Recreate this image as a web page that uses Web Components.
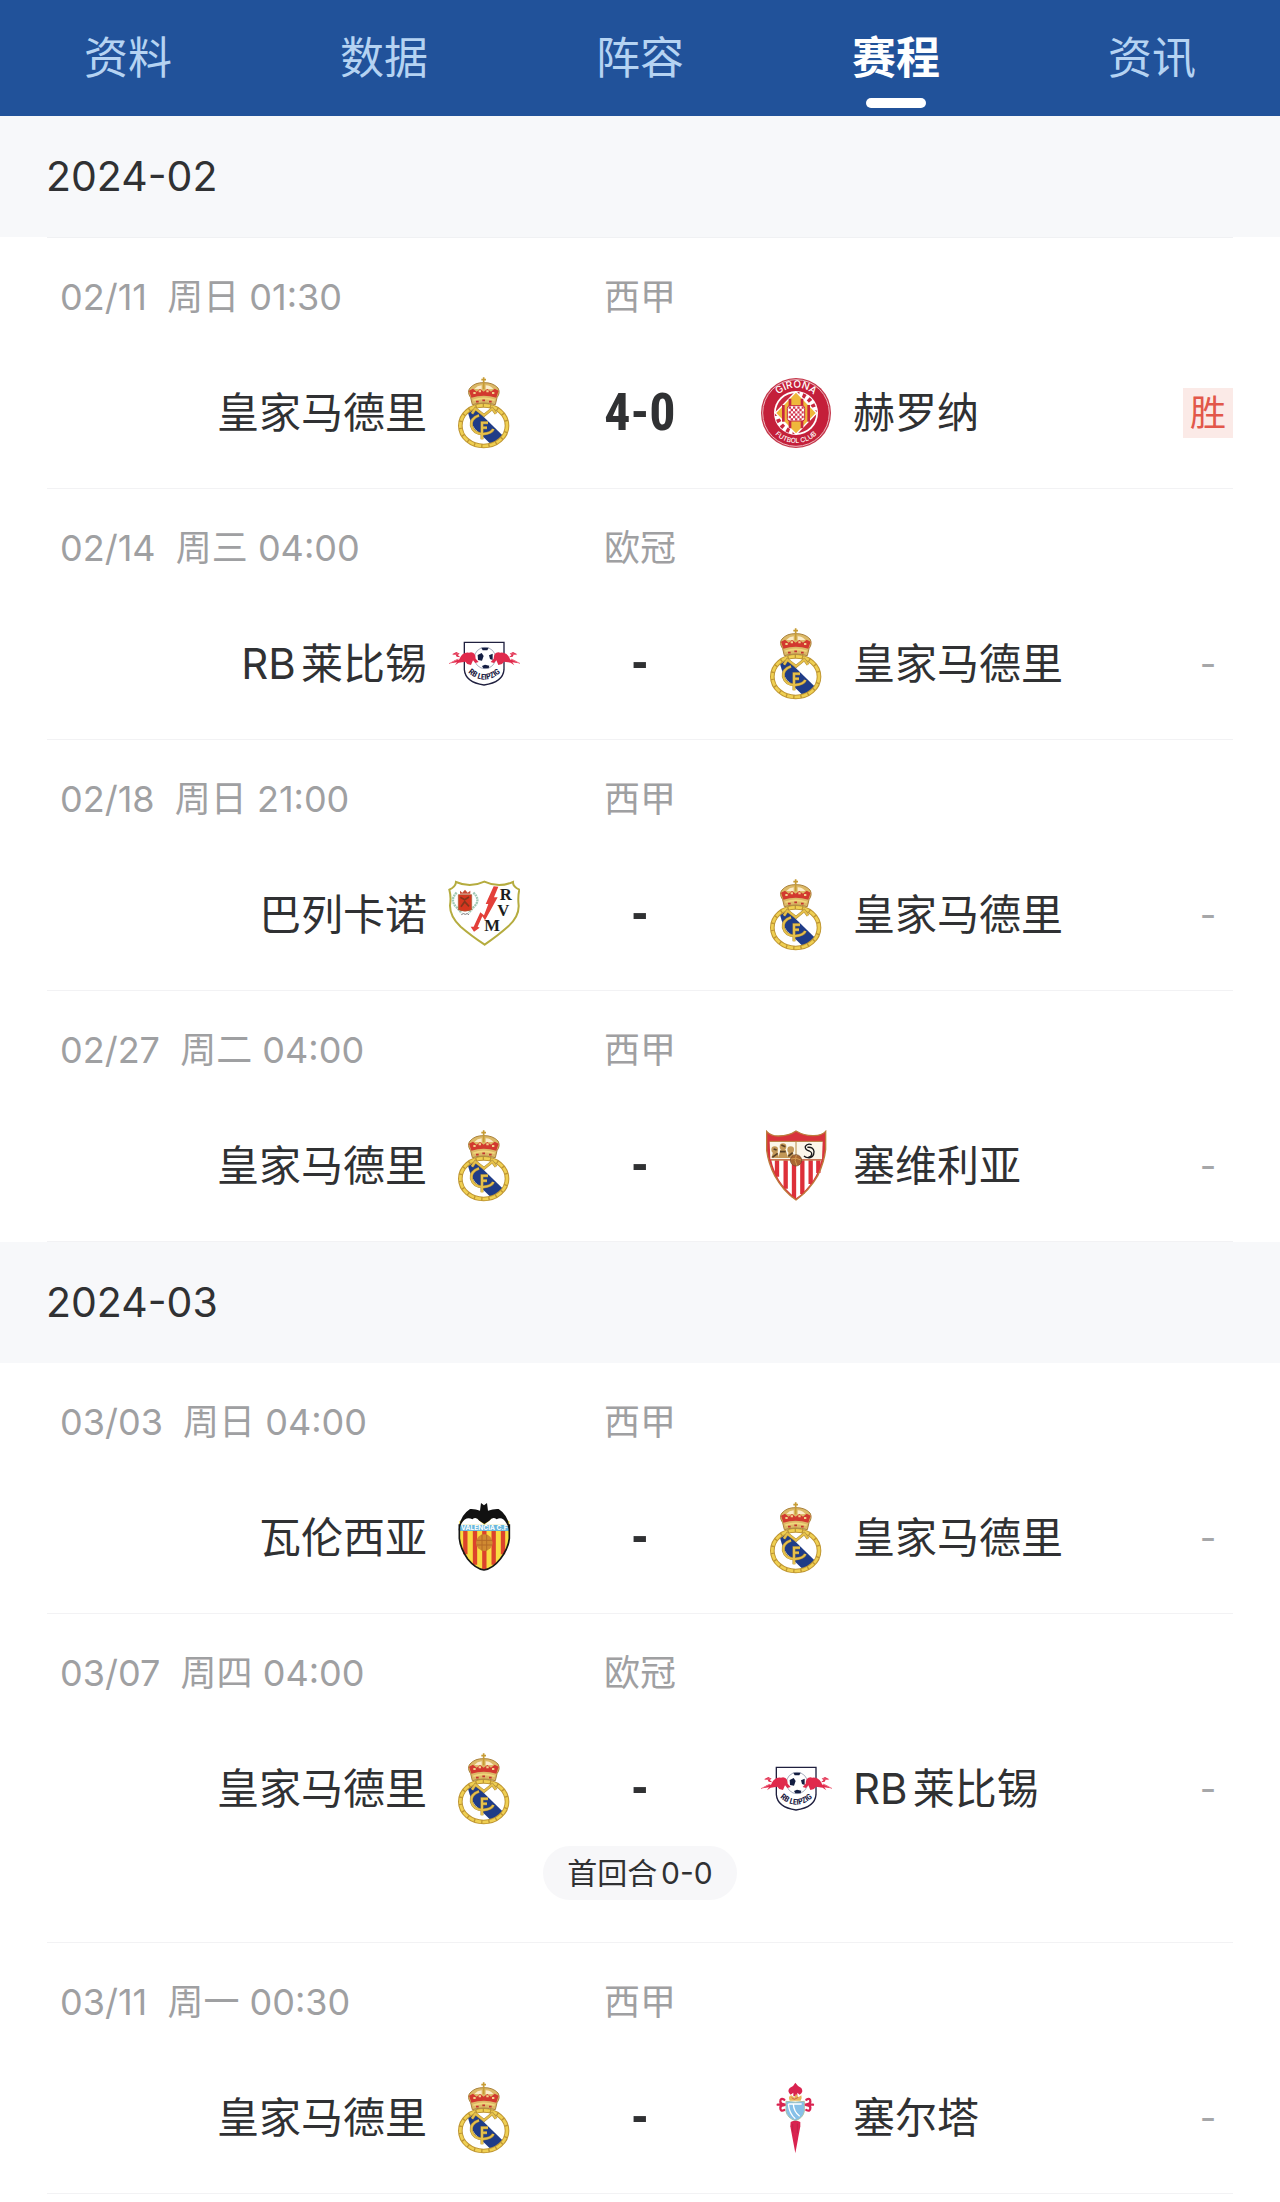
<!DOCTYPE html>
<html lang="zh-CN">
<head>
<meta charset="utf-8">
<meta name="viewport" content="width=device-width, initial-scale=1">
<title>赛程</title>
<style>
    body {
        margin: 0;
        background: #fff;
        color: #303133;
        font-family: Inter, "Noto Sans CJK SC", sans-serif;
        text-autospace: normal;
    }
</style>
</head>
<body>

<tab-bar>
    <tab-item>资料</tab-item>
    <tab-item>数据</tab-item>
    <tab-item>阵容</tab-item>
    <tab-item active>赛程</tab-item>
    <tab-item>资讯</tab-item>
</tab-bar>

<main>
    <month-section month="2024-02" lined>
        <match-row date="02/11  周日 01:30" league="西甲" home="皇家马德里" home-crest="real" score="4-0" away="赫罗纳" away-crest="girona" result="胜"></match-row>
        <match-row date="02/14  周三 04:00" league="欧冠" home="RB莱比锡" home-crest="leipzig" score="-" away="皇家马德里" away-crest="real" result="-"></match-row>
        <match-row date="02/18  周日 21:00" league="西甲" home="巴列卡诺" home-crest="rayo" score="-" away="皇家马德里" away-crest="real" result="-"></match-row>
        <match-row date="02/27  周二 04:00" league="西甲" home="皇家马德里" home-crest="real" score="-" away="塞维利亚" away-crest="sevilla" result="-"></match-row>
    </month-section>
    <month-section month="2024-03">
        <match-row date="03/03  周日 04:00" league="西甲" home="瓦伦西亚" home-crest="valencia" score="-" away="皇家马德里" away-crest="real" result="-"></match-row>
        <match-row date="03/07  周四 04:00" league="欧冠" home="皇家马德里" home-crest="real" score="-" away="RB莱比锡" away-crest="leipzig" result="-">首回合0-0</match-row>
        <match-row date="03/11  周一 00:30" league="西甲" home="皇家马德里" home-crest="real" score="-" away="塞尔塔" away-crest="celta" result="-"></match-row>
    </month-section>
</main>

<script>
const CRESTS = {
    real: `<svg viewBox="24 51 216 216">
        <ellipse cx="131" cy="197" rx="70" ry="61" fill="#fff"/>
        <path d="M84 158 L106 146 L192 230 L158 258 L106 208 Q92 190 84 158Z" fill="#1f3c88"/>
        <ellipse cx="131" cy="197" rx="70" ry="61" fill="none" stroke="#bf9633" stroke-width="14"/>
        <ellipse cx="131" cy="197" rx="70" ry="61" fill="none" stroke="#efcf52" stroke-width="8" stroke-dasharray="18 4"/>
        <g fill="none" stroke="#a98a3c" stroke-width="9">
            <path d="M96 161 L106 146 L132 166 L157 146 L168 161"/>
            <path d="M117 166 Q91 175 94 197 Q101 222 130 222 Q155 220 160 207"/>
            <path d="M126 238 V188 H144 M126 203 H141"/>
        </g>
        <g fill="none" stroke="#e6c04a" stroke-width="6">
            <path d="M96 161 L106 146 L132 166 L157 146 L168 161"/>
            <path d="M117 166 Q91 175 94 197 Q101 222 130 222 Q155 220 160 207"/>
            <path d="M126 238 V188 H144 M126 203 H141"/>
        </g>
        <path d="M97 134 L92 113 Q80 96 90 84 Q105 67 131 68 Q158 67 174 84 Q182 98 171 113 L166 134 Q131 124 97 134Z" fill="#dcb967" stroke="#a9813a" stroke-width="3"/>
        <path d="M103 87 Q112 77 125 76 V88Z M137 76 Q152 77 160 87 L137 88Z" fill="#fbecc9"/>
        <path d="M87 92 L99 86 L110 95 L120 87 L131 95 L142 87 L153 95 L164 86 L176 92 L169 113 Q131 101 94 113Z" fill="#d2392f"/>
        <path d="M100 99 h7 M116 94 h7 M139 94 h7 M156 99 h7" stroke="#f2d18a" stroke-width="6"/>
        <path d="M100 121 Q131 109 164 121" fill="none" stroke="#f1d77c" stroke-width="5"/>
        <path d="M108 125 h8 M127 121 h8 M147 125 h8" stroke="#c3352f" stroke-width="5"/>
        <path d="M131 52 V88 M124 59 H138" stroke="#c79c35" stroke-width="5"/>
    </svg>`,
    girona: `<svg viewBox="43 34 216 216">
        <circle cx="151" cy="142" r="105" fill="#c4364a"/>
        <circle cx="151" cy="142" r="100" fill="#c41f3a" stroke="#edb9c0" stroke-width="3"/>
        <circle cx="151" cy="142" r="66" fill="#fff"/>
        <g fill="none" stroke="#c8273f" stroke-width="13">
            <path d="M151 85 A58 58 0 0 1 207 142" stroke-dasharray="10 10"/>
            <path d="M151 199 A58 58 0 0 1 94 142" stroke-dasharray="10 10"/>
        </g>
        <path d="M90 142 A61 61 0 0 1 151 82 Z M212 142 A61 61 0 0 1 151 202Z" fill="#c8273f"/>
        <path d="M151 78 L213 142 L151 206 L89 142Z" fill="#efb83b" stroke="#fff" stroke-width="4"/>
        <path d="M133 99 V188 M169 99 V188 M113 118 V168 M189 118 V168" stroke="#c8273f" stroke-width="8"/>
        <rect x="125" y="120" width="52" height="46" rx="8" fill="#fff" stroke="#c8273f" stroke-width="3"/>
        <g stroke="#d23a51" stroke-width="7" stroke-dasharray="7 6">
            <path d="M129 126 H174 M129 140 H174 M129 154 H174"/>
            <path d="M135 133 H174 M135 147 H174 M135 161 H170"/>
        </g>
        <path id="top" d="M75 142 A76 76 0 0 1 227 142" fill="none"/>
        <path id="low" d="M61 142 A90 90 0 0 0 241 142" fill="none"/>
        <g fill="#fff" font-family="Inter, sans-serif" text-anchor="middle">
            <text font-size="30" font-weight="500"><textPath href="#top" startOffset="50%">GIRONA</textPath></text>
            <text font-size="20" font-weight="500"><textPath href="#low" startOffset="50%">FUTBOL CLUB</textPath></text>
        </g>
    </svg>`,
    leipzig: `<svg viewBox="39 24 216 216">
        <path d="M88 67 H207 V149 Q204 187 147 195 Q91 187 88 149Z" fill="#fff" stroke="#20203f" stroke-width="4"/>
        <circle cx="150" cy="114" r="32" fill="#fff" stroke="#77809a" stroke-width="2"/>
        <path d="M139 83 H161 L157 91 H143Z M128 105 L140 99 L146 108 L141 122 L129 120Z M162 106 L173 101 V120 L165 117Z M141 138 L150 134 L163 137 L161 145 H145Z" fill="#141e42"/>
        <g fill="#e02a4c">
            <path d="M47 130 Q62 115 72 119 Q82 95 102 98 Q121 93 122 116 L131 126 L121 129 L114 121 L108 135 L97 132 L91 125 L71 128 L60 136 L66 127Z"/>
            <path d="M51 103 L64 96 L74 101 L68 105 L76 112 L65 110 L62 104Z"/>
        </g>
        <path d="M42 131 L70 117 M54 104 L70 101" stroke="#ef7085" stroke-width="3"/>
        <g transform="matrix(-1 0 0 1 298 0)" fill="#e02a4c">
            <path d="M47 130 Q62 115 72 119 Q82 95 102 98 Q121 93 122 116 L131 126 L121 129 L114 121 L108 135 L97 132 L91 125 L71 128 L60 136 L66 127Z"/>
            <path d="M51 103 L64 96 L74 101 L68 105 L76 112 L65 110 L62 104Z"/>
            <path d="M42 131 L70 117 M54 104 L70 101" stroke="#ef7085" stroke-width="3"/>
        </g>
        <path id="arc" d="M88 146 Q147 212 208 146" fill="none"/>
        <text fill="#20203f" font-family="Roboto Condensed, Roboto, sans-serif" font-size="24" font-weight="700" text-anchor="middle"><textPath href="#arc" startOffset="50%">RB LEIPZIG</textPath></text>
    </svg>`,
    rayo: `<svg viewBox="39 44 216 216">
        <path d="M63 53 Q105 72 148 52 Q191 72 234 53 Q233 66 253 76 Q248 97 251 124 Q252 157 220 186 Q190 213 149 241 Q106 212 77 187 Q45 157 45 124 Q49 97 43 76 Q62 67 63 53Z" fill="#fff" stroke="#b5ac3f" stroke-width="6"/>
        <path d="M65 85 Q43 107 64 128 L80 146 M115 85 Q139 107 116 128 L101 146" fill="none" stroke="#9fc7b2" stroke-width="7" stroke-dasharray="6 2"/>
        <path d="M70 91 H110 V136 Q90 145 70 136Z" fill="#d5361f" stroke="#a4572e" stroke-width="2"/>
        <path d="M75 88 V79 L82 85 L90 76 L98 85 L106 79 V88Z" fill="#c64a33"/>
        <path d="M76 99 L89 106 L102 98 M78 127 L89 112 L102 126" stroke="#84351c" stroke-width="5" fill="none"/>
        <path d="M79 151 Q85 145 91 150 Q96 145 102 151" stroke="#777" stroke-width="3" fill="none"/>
        <path d="M176 66 L190 67 L177 99 L188 99 L150 168 L142 156 L128 187 L134 190 L117 202 L107 187 L116 187 L136 144 L147 153 L160 119 L152 119Z" fill="#e3403a"/>
        <g fill="#1b1d20" font-family="Liberation Serif, serif" font-size="50" font-weight="700" text-anchor="middle">
            <text x="212" y="107">R</text>
            <text x="205" y="154">V</text>
            <text x="171" y="199">M</text>
        </g>
    </svg>`,
    sevilla: `<svg viewBox="42 48 216 216">
        <path d="M62 52 Q76 67 98 66 Q130 65 150 51 Q175 66 204 65 Q228 64 239 52 V106 Q235 143 216 184 Q190 229 150 258 Q111 231 86 185 Q67 148 62 109Z" fill="#d8333b"/>
        <path d="M71 83 H230 L228 136 H73Z" fill="#fbf7ea"/>
        <path d="M76 139 H226 Q216 178 202 198 Q180 232 150 253 Q116 225 99 198 Q81 165 76 139Z" fill="#fff"/>
        <path d="M93 139 V188 M119 139 V224 M144 139 V252 M169 139 V240 M194 139 V210 M217 139 V177" stroke="#dd3039" stroke-width="13"/>
        <path d="M62 52 Q76 67 98 66 Q130 65 150 51 Q175 66 204 65 Q228 64 239 52 V106 Q235 143 216 184 Q190 229 150 258 Q111 231 86 185 Q67 148 62 109Z" fill="none" stroke="#bd7b3c" stroke-width="4"/>
        <path d="M71 82 H230 M150 83 V137 M75 138 H227" stroke="#b58a46" stroke-width="3"/>
        <g fill="#c39858">
            <circle cx="86" cy="107" r="10"/><path d="M76 131 L82 112 H94 L99 132Z"/>
            <circle cx="111" cy="98" r="10"/><path d="M97 132 L103 107 H119 L126 132Z"/>
            <circle cx="134" cy="107" r="10"/><path d="M123 132 L129 112 H140 L145 132Z"/>
        </g>
        <path d="M79 130 L95 118 M102 113 H119 M106 93 L118 98 M127 127 L140 116 M83 105 L92 108" stroke="#563f27" stroke-width="5"/>
        <path d="M197 92 Q184 87 178 97 Q176 107 190 111 Q202 116 194 127 Q183 135 174 126 M184 100 Q203 98 204 113 Q204 130 187 132" fill="none" stroke="#191919" stroke-width="4"/>
        <circle cx="150" cy="139" r="17" fill="#a96731" stroke="#6f4528" stroke-width="2"/>
        <path d="M135 135 Q150 129 165 138 M151 123 Q143 141 153 155" fill="none" stroke="#d29a51" stroke-width="3"/>
    </svg>`,
    valencia: `<svg viewBox="40 36 216 216">
        <path d="M74 93 Q149 77 224 93 V145 Q222 175 197 206 Q174 236 148 240 Q121 235 99 207 Q76 176 74 145Z" fill="#f9dc42"/>
        <path d="M92 120 V193 M121 120 V224 M149 120 V238 M177 120 V224 M205 120 V193" stroke="#dc432c" stroke-width="13"/>
        <path d="M74 104 H223 V123 H74Z" fill="#69b8dd"/>
        <path d="M78 104 Q92 76 113 86 Q123 76 134 92 L149 104 L164 92 Q176 76 185 86 Q206 76 220 104Z" fill="#fff"/>
        <path d="M74 103 V145 Q77 175 99 207 Q122 236 148 240 Q174 236 197 207 Q221 176 224 145 V103" fill="none" stroke="#171717" stroke-width="5"/>
        <path d="M72 122 Q74 78 106 57 Q122 56 136 62 L139 39 L148 46 L157 39 L160 62 Q176 56 192 57 Q224 78 225 122 L216 101 Q203 78 186 88 Q174 78 164 92 L149 102 L134 92 Q124 78 113 88 Q94 78 80 101Z" fill="#111"/>
        <text x="149" y="121" fill="#fff" font-family="Inter, sans-serif" font-size="20" font-weight="700" text-anchor="middle">VALENCIA C.F</text>
        <circle cx="149" cy="158" r="25" fill="#d08a31"/>
        <path d="M126 151 H172 M126 165 H172 M142 134 V182 M156 134 V182" stroke="#b46b27" stroke-width="3"/>
    </svg>`,
    celta: `<svg viewBox="45 48 216 216">
        <path d="M151 50 Q157 60 169 66 Q177 79 164 86 L157 80 V91 H145 V80 L137 86 Q125 76 134 66 Q147 60 151 50Z" fill="#d92350"/>
        <g fill="none" stroke="#d92350" stroke-width="7" stroke-linecap="round">
            <path d="M98 116 H124 M118 101 Q106 94 106 107 Q106 114 118 115 M118 132 Q106 138 106 125 Q106 118 118 117"/>
            <path d="M204 116 H178 M184 101 Q196 94 196 107 Q196 114 184 115 M184 132 Q196 138 196 125 Q196 118 184 117"/>
        </g>
        <path d="M134 104 Q128 91 139 88 L148 95 L153 83 L160 94 L169 88 Q172 96 167 104Z" fill="#e7b65a"/>
        <path d="M140 95 L148 100 L160 94" stroke="#d46052" stroke-width="3" fill="none"/>
        <path d="M123 106 Q151 111 178 106 V136 Q174 157 151 164 Q127 156 123 136Z" fill="#86c0e8" stroke="#a9c2a9" stroke-width="3"/>
        <path d="M130 114 Q133 144 151 158 M145 114 Q146 137 164 151 M130 114 H170" fill="none" stroke="#fff" stroke-width="4"/>
        <path d="M137 168 Q151 160 166 168 L166 181 L151 262 L136 181Z" fill="#d92350"/>
        <path d="M143 174 V199 M157 173 V201" stroke="#bd244b" stroke-width="3"/>
    </svg>`
};

class TabBar extends HTMLElement {
    constructor() {
        super();
        this.attachShadow({ mode: 'open' }).innerHTML = `
        <style>
        :host {
            display: block;
            background: #21529a;
        }
        nav {
            display: flex;
            height: 116px;
        }
        </style>
        <nav><slot></slot></nav>
        `;
    }
}

class TabItem extends HTMLElement {
    constructor() {
        super();
        this.attachShadow({ mode: 'open' }).innerHTML = `
        <style>
        :host {
            display: flex;
            flex: 1;
        }
        button {
            display: flex;
            flex: 1;
            flex-direction: column;
            align-items: center;
            gap: 10px;
            padding: 28px 0 0;
            border: 0;
            background: none;
            color: #b5d3f2;
            font: 400 44px/60px Inter, "Noto Sans CJK SC", sans-serif;
            cursor: pointer;
        }
        :host([active]) button {
            color: #fff;
            font-weight: 700;
        }
        :host([active]) button::after {
            content: "";
            width: 60px;
            height: 10px;
            border-radius: 5px;
            background: #fff;
        }
        </style>
        <button type="button"><slot></slot></button>
        `;
    }
}

class MonthSection extends HTMLElement {
    constructor() {
        super();
        this.attachShadow({ mode: 'open' }).innerHTML = `
        <style>
        :host {
            display: block;
        }
        h2 {
            margin: 0;
            padding: 0 46px;
            background: #f7f8fa;
            font-size: 41px;
            font-weight: 400;
            line-height: 121px;
        }
        .lista {
            margin: 0 47px;
        }
        :host([lined]) .lista {
            border-top: 1px solid #f0f1f3;
        }
        </style>
        <h2></h2>
        <div class="lista"><slot></slot></div>
        `;
    }

    connectedCallback() {
        this.shadowRoot.querySelector('h2').textContent = this.getAttribute('month');
    }
}

class ClubCrest extends HTMLElement {
    constructor() {
        super();
        this.attachShadow({ mode: 'open' });
    }

    static get observedAttributes() {
        return ['name'];
    }

    attributeChangedCallback() {
        this.shadowRoot.innerHTML = `
        <style>
        :host {
            display: block;
            flex: none;
            width: 72px;
            height: 72px;
        }
        svg {
            display: block;
            width: 100%;
            height: 100%;
        }
        </style>
        ${CRESTS[this.getAttribute('name')] || ''}
        `;
    }
}

class MatchRow extends HTMLElement {
    constructor() {
        super();
        this.attachShadow({ mode: 'open' });
    }

    connectedCallback() {
        const get = (name) => this.getAttribute(name);
        const note = this.textContent.trim();
        this.shadowRoot.innerHTML = `
        <style>
        :host {
            display: block;
            padding: 34px 0 39px;
            border-bottom: 1px solid #f2f2f4;
        }
        .meta, .teams {
            display: grid;
            grid-template-columns: 1fr 240px 1fr;
            align-items: center;
        }
        .meta {
            margin-bottom: 55px;
            color: #9fa0a2;
            font-size: 36px;
            line-height: 50px;
        }
        .meta time {
            padding-left: 13px;
            white-space: pre;
        }
        .meta span, .score {
            text-align: center;
        }
        .side {
            display: flex;
            align-items: center;
            gap: 21px;
            font-size: 42px;
            line-height: 60px;
            white-space: nowrap;
        }
        .home {
            justify-content: flex-end;
        }
        .score {
            font: 700 52px/72px "Roboto Condensed", Roboto, sans-serif;
        }
        .result {
            width: 50px;
            margin-left: auto;
            color: #a6a7a9;
            font-size: 36px;
            line-height: 50px;
            text-align: center;
        }
        .win {
            background: #fbeae7;
            color: #e2574a;
        }
        .note {
            width: fit-content;
            margin: 21px auto 3px;
            padding: 0 24px;
            border-radius: 27px;
            background: #f7f7f9;
            font-size: 30px;
            line-height: 54px;
        }
        </style>
        <div class="meta">
            <time>${get('date')}</time>
            <span>${get('league')}</span>
        </div>
        <div class="teams">
            <div class="side home">${get('home')}<club-crest name="${get('home-crest')}"></club-crest></div>
            <div class="score">${get('score')}</div>
            <div class="side">
                <club-crest name="${get('away-crest')}"></club-crest>${get('away')}
                <span class="result ${get('result') === '-' ? '' : 'win'}">${get('result')}</span>
            </div>
        </div>
        ${note ? '<div class="note"><slot></slot></div>' : ''}
        `;
    }
}

customElements.define('tab-bar', TabBar);
customElements.define('tab-item', TabItem);
customElements.define('month-section', MonthSection);
customElements.define('club-crest', ClubCrest);
customElements.define('match-row', MatchRow);
</script>
</body>
</html>
